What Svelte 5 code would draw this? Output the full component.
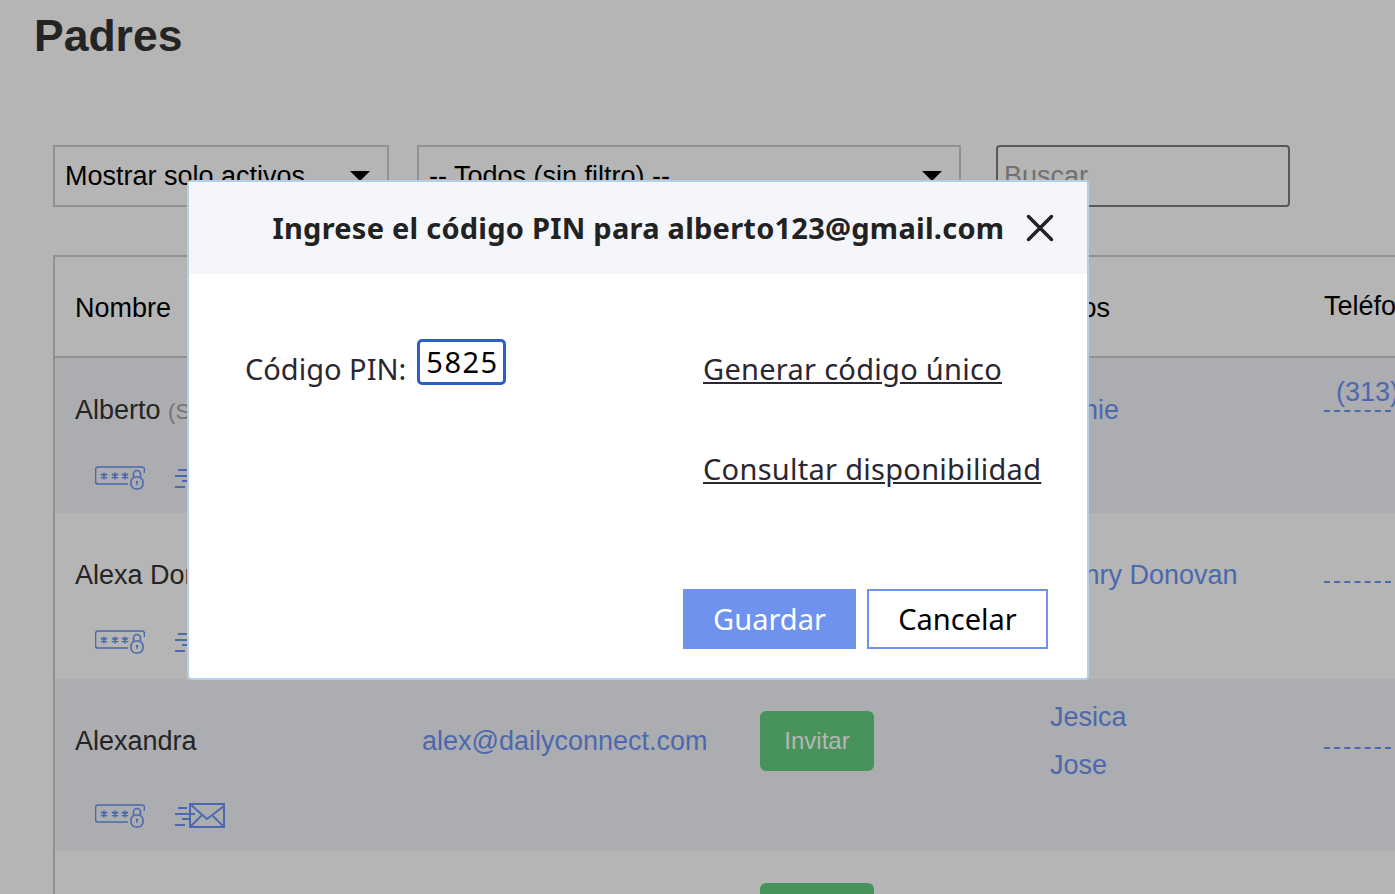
<script>
let rows = [
  { name: 'Alberto', note: '(Sin acceso)', email: 'alberto123@gmail.com', kids: ['Annie'], phone: '(313) 555-0142', mainH: 76, gap: 16, phoneH: 40, pb: 23 },
  { name: 'Alexa Donovan', note: '', email: 'alexa@dailyconnect.com', kids: ['Henry Donovan'], phone: '', mainH: 96, gap: 5, phoneH: 56, pb: 25 },
  { name: 'Alexandra', note: '', email: 'alex@dailyconnect.com', kids: ['Jesica', 'Jose'], phone: '', mainH: 96, gap: 13, phoneH: 56, pb: 23 },
  { name: 'Alicia', note: '', email: 'alicia@dailyconnect.com', kids: ['Mateo'], phone: '', mainH: 96, gap: 13, phoneH: 56, pb: 23 }
];

let pin = $state('5825');
</script>

<div class="page">
  <h1>Padres</h1>

  <div class="filters">
    <div class="select first"><span>Mostrar solo activos</span><i class="caret"></i></div>
    <div class="select second"><span>-- Todos (sin filtro) --</span><i class="caret"></i></div>
    <input class="search" placeholder="Buscar" />
  </div>

  <div class="table">
    <div class="cols head">
      <div>Nombre</div>
      <div>Correo electrónico</div>
      <div>Estado</div>
      <div>Hijos</div>
      <div class="phonehead">Teléfono</div>
    </div>

    {#each rows as row, i}
      <div class="row" class:tint={i % 2 === 0} style="padding-bottom: {row.pb}px">
        <div class="cols main" style="height: {row.mainH}px">
          <div class="name">{row.name} {#if row.note}<small>{row.note}</small>{/if}</div>
          <div class="link">{row.email}</div>
          <div><button class="invite">Invitar</button></div>
          <div class="kids">
            {#each row.kids as kid}
              <span class="link">{kid}</span>
            {/each}
          </div>
          <div class="phone" style="height: {row.phoneH}px"><span class="link">{row.phone}</span></div>
        </div>
        <div class="icons" style="margin-top: {row.gap}px">
          <svg width="50" height="26" viewBox="0 0 50 26" fill="none" stroke="#6b93f5" stroke-width="1.6">
            <path d="M33 20H3a2.500 2.500 0 0 1-2.500-2.500V5.500A2.500 2.500 0 0 1 3 3h44a2.500 2.500 0 0 1 2.500 2.500V9" />
            <path d="M9 8.500v7M6 10l6 4M12 10l-6 4M20 8.500v7M17 10l6 4M23 10l-6 4M30 8.500v7M27 10l6 4M33 10l-6 4" stroke-width="1.700" />
            <rect x="36" y="13" width="12" height="12" rx="5" />
            <path d="M38.500 13.500V10a3.500 3.500 0 0 1 7 0v3.500" />
            <circle cx="42" cy="18" r="1.200" fill="#6b93f5" stroke="none" />
            <path d="M42 18v3" stroke-width="1.200" />
          </svg>
          <svg width="50" height="26" viewBox="0 0 50 26" fill="none" stroke="#6b93f5" stroke-width="2">
            <rect x="15" y="2" width="34" height="23" />
            <path d="M15 2l17 15L49 4M15 25l12-12M49 25L37 13" stroke-width="1.800" />
            <path d="M3 6h9M0 12h20M7 17h8M0 23h10" />
          </svg>
        </div>
      </div>
    {/each}
  </div>
</div>

<div class="overlay"></div>

<div class="modal">
  <div class="modalhead">
    <h2>Ingrese el código PIN para alberto123@gmail.com</h2>
    <button class="close" aria-label="Cerrar">
      <svg width="28" height="28" viewBox="0 0 28 28" stroke="#222" stroke-width="3.500" stroke-linecap="round">
        <path d="M2.500 2.500l23 23M25.500 2.500l-23 23" />
      </svg>
    </button>
  </div>
  <div class="modalbody">
    <div class="pinrow">
      <div class="pinfield">
        <span>Código PIN:</span>
        <input class="pin" bind:value={pin} />
      </div>
      <div class="actions">
        <a href="#generar">Generar código único</a>
        <a href="#consultar">Consultar disponibilidad</a>
      </div>
    </div>
    <div class="footer">
      <button class="save">Guardar</button>
      <button class="cancel">Cancelar</button>
    </div>
  </div>
</div>

<style>
:global(body) {
  background: #fff;
  overflow: hidden;
  height: 894px;
}

.page {
  width: 1395px;
  height: 894px;
  overflow: hidden;
  font-family: "Liberation Sans", Arial, sans-serif;
  font-size: 27px;
  color: #333;
}

h1 {
  margin: 0 0 0 34px;
  height: 72px;
  line-height: 72px;
  font-size: 44.500px;
  font-weight: bold;
}

.filters {
  display: flex;
  margin: 73px 0 0 53px;
}

.select {
  box-sizing: border-box;
  height: 62px;
  border: 2px solid #ccc;
  padding: 0 17px 0 10px;
  display: flex;
  align-items: center;
  justify-content: space-between;
  color: #000;
}

.select.first {
  width: 336px;
  margin-right: 28px;
}

.select.second {
  width: 544px;
  margin-right: 35px;
}

.caret {
  width: 0;
  height: 0;
  border-left: 10px solid transparent;
  border-right: 10px solid transparent;
  border-top: 10px solid #000;
}

.search {
  box-sizing: border-box;
  width: 294px;
  height: 62px;
  border: 2px solid #7c7c7c;
  border-radius: 4px;
  background: transparent;
  padding: 0 6px;
  font: inherit;
}

.search::placeholder {
  color: #a0a0a0;
}

.table {
  margin: 48px 0 0 53px;
  width: 1500px;
  border-left: 2px solid #ccc;
  border-top: 2px solid #ccc;
}

.cols {
  display: grid;
  grid-template-columns: 347px 338px 290px 274px 250px;
  grid-template-rows: 100%;
  padding-left: 20px;
  align-items: center;
}

.head {
  height: 96px;
  padding-top: 3px;
  border-bottom: 2px solid #ccc;
  color: #000;
}

.phonehead {
  margin-top: -4px;
}

.row {
  padding-top: 14px;
}

.row.tint {
  background: #f3f4f8;
}

.link {
  color: #6b93f5;
}

.name small {
  font-size: 22px;
  color: #a3a3a3;
}

.invite {
  width: 114px;
  height: 60px;
  border: 0;
  border-radius: 6px;
  background: #64d081;
  color: #fff;
  font: 24px "Liberation Sans", Arial, sans-serif;
}

.kids {
  display: flex;
  flex-direction: column;
  line-height: 48px;
}

.phone {
  align-self: start;
  box-sizing: border-box;
  border-bottom: 2px dashed #6b93f5;
  padding-left: 12px;
  line-height: 40px;
  white-space: nowrap;
  overflow: hidden;
}

.icons {
  display: flex;
  gap: 30px;
  padding-left: 40px;
}

.overlay {
  position: fixed;
  inset: 0;
  background: rgba(0, 0, 0, 0.29);
}

.modal {
  position: fixed;
  left: 187px;
  top: 180px;
  box-sizing: border-box;
  width: 902px;
  height: 500px;
  border: 2px solid #b5cfea;
  border-radius: 4px;
  background: #fff;
  font-family: "Noto Sans", sans-serif;
  color: #2b2730;
}

.modalhead {
  height: 92px;
  background: #f4f6fc;
  display: flex;
  align-items: center;
  padding-left: 83.500px;
  gap: 22px;
}

h2 {
  margin: 0 0 2px;
  font-size: 29px;
  font-weight: bold;
  letter-spacing: 0.24px;
  color: #222;
  white-space: nowrap;
}

.close {
  border: 0;
  background: none;
  padding: 0;
  display: flex;
}

.modalbody {
  padding: 65px 39px 0 56px;
  font-size: 29px;
  letter-spacing: 0.2px;
}

.pinrow {
  display: flex;
  height: 250px;
}

.pinfield {
  flex: none;
  width: 458px;
  display: flex;
  align-items: flex-start;
  gap: 11px;
  line-height: 60px;
  letter-spacing: 0;
}

.pin {
  box-sizing: border-box;
  width: 89px;
  height: 46px;
  border: 3px solid #2a5fc8;
  border-radius: 5px;
  padding: 0 6px 2px;
  font: 29px "Noto Sans", sans-serif;
  letter-spacing: 1.500px;
  color: #000;
  outline: none;
}

.actions {
  display: flex;
  flex-direction: column;
  align-items: flex-start;
  gap: 40px;
  line-height: 60px;
  white-space: nowrap;
  letter-spacing: 0.28px;
}

.actions a {
  color: #2b2730;
}

.footer {
  display: flex;
  justify-content: flex-end;
  gap: 11px;
}

.footer button {
  box-sizing: border-box;
  height: 60px;
  padding: 0 0 2px;
  font: 29px "Noto Sans", sans-serif;
}

.save {
  width: 173px;
  border: 0;
  background: #6e92ee;
  color: #fff;
}

.cancel {
  width: 181px;
  border: 2px solid #6e92ee;
  background: #fff;
  color: #000;
}
</style>
